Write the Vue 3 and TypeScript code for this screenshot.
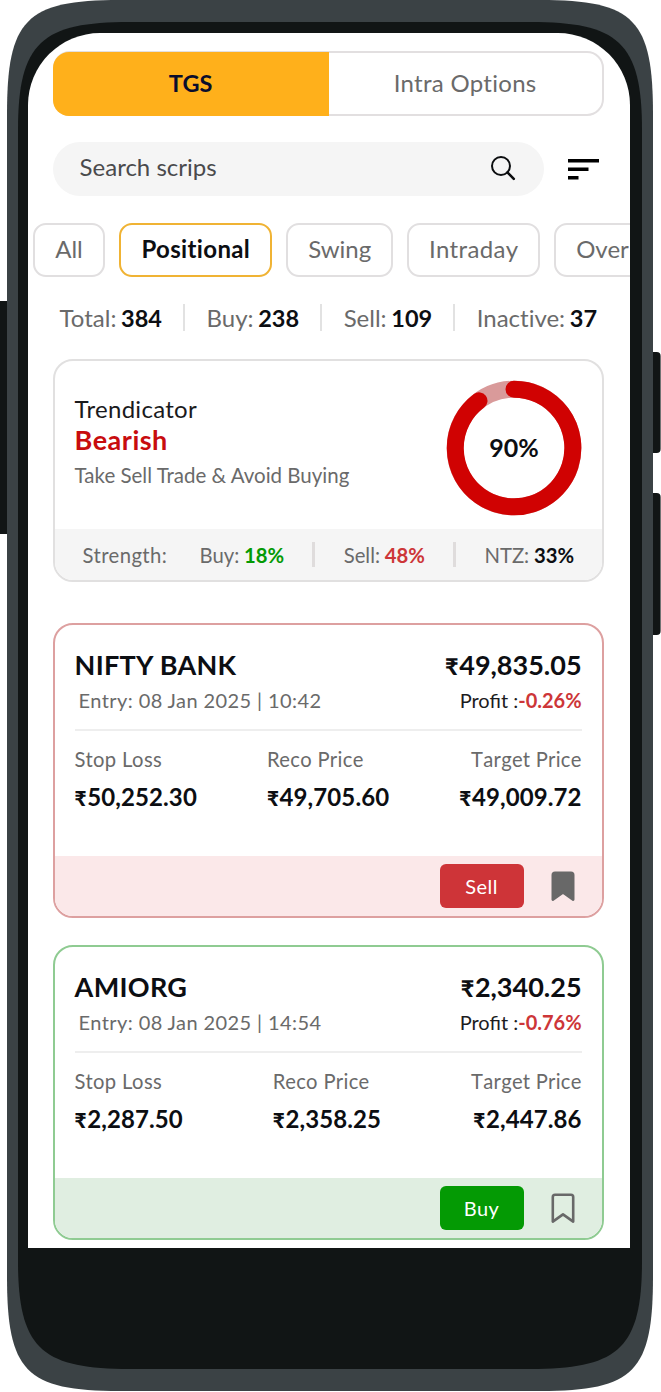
<script setup lang="ts">
interface Filter { label: string; active?: boolean }
interface Count { label: string; value: string }
interface Trade {
  name: string
  price: string
  time: string
  profit: string
  stop: string
  reco: string
  target: string
  side: 'Sell' | 'Buy'
  saved: boolean
}

const filters: Filter[] = [
  { label: 'All' },
  { label: 'Positional', active: true },
  { label: 'Swing' },
  { label: 'Intraday' },
  { label: 'Over' },
]

const counts: Count[] = [
  { label: 'Total:', value: '384' },
  { label: 'Buy:', value: '238' },
  { label: 'Sell:', value: '109' },
  { label: 'Inactive:', value: '37' },
]

const trades: Trade[] = [
  {
    name: 'NIFTY BANK', price: '49,835.05', time: '08 Jan 2025 | 10:42', profit: '-0.26%',
    stop: '50,252.30', reco: '49,705.60', target: '49,009.72', side: 'Sell', saved: true,
  },
  {
    name: 'AMIORG', price: '2,340.25', time: '08 Jan 2025 | 14:54', profit: '-0.76%',
    stop: '2,287.50', reco: '2,358.25', target: '2,447.86', side: 'Buy', saved: false,
  },
]
</script>

<template>
  <main class="device">
    <svg class="frame" viewBox="0 0 661 1392" aria-hidden="true">
      <g fill="#111515">
        <rect x="-6" y="301" width="20" height="233" rx="4" />
        <rect x="640" y="352" width="20.6" height="101" rx="4" />
        <rect x="640" y="493" width="20.6" height="142" rx="4" />
      </g>
      <path fill="#3b4245" d="M7 115C7 20 25 0 120 0H540C635 0 653 20 653 115V1276C653 1371 635 1391 540 1391H120C25 1391 7 1371 7 1276Z" />
      <path fill="#111515" d="M18 130C18 42 42 22 130 22H530C618 22 642 42 642 130V1261C642 1349 618 1369 530 1369H130C42 1369 18 1349 18 1261Z" />
    </svg>

    <div class="screen">
      <nav class="tabs">
        <button class="tab on">TGS</button>
        <button class="tab">Intra Options</button>
      </nav>

      <div class="search-row">
        <div class="search">
          <span>Search scrips</span>
          <svg width="28" height="28" viewBox="0 0 28 28" fill="none" stroke="#0c0e10">
            <circle cx="12" cy="12" r="9" stroke-width="2" />
            <path d="M18.4 18.4L24.8 24.8" stroke-width="2.6" stroke-linecap="round" />
          </svg>
        </div>
        <svg class="sort" width="31" height="21" viewBox="0 0 31 21" fill="#000">
          <path d="M0 0H31V3.6H0ZM0 8.6H20.5V12H0ZM0 17H10.5V20.4H0Z" />
        </svg>
      </div>

      <div class="filters">
        <button v-for="f in filters" :key="f.label" class="chip" :class="[f.label.toLowerCase(), { active: f.active }]">{{ f.label }}</button>
      </div>

      <div class="counts">
        <template v-for="(c, i) in counts" :key="c.label">
          <i v-if="i" class="bar" />
          <span>{{ c.label }} <b>{{ c.value }}</b></span>
        </template>
      </div>

      <section class="trend">
        <div class="trend-main">
          <div class="trend-text">
            <span class="t-title">Trendicator</span>
            <strong class="t-state">Bearish</strong>
            <span class="t-note">Take Sell Trade &amp; Avoid Buying</span>
          </div>
          <svg class="ring" width="136" height="136" viewBox="0 0 136 136">
            <circle cx="68" cy="68" r="58.8" fill="none" stroke="#d99a9a" stroke-width="17" />
            <path d="M68 9.2A58.8 58.8 0 1 1 33 20.8" fill="none" stroke="#d00202" stroke-width="17" stroke-linecap="round" />
            <text x="68" y="77" text-anchor="middle">90%</text>
          </svg>
        </div>
        <div class="strength">
          <span class="s-label">Strength:</span>
          <span>Buy: <b class="green">18%</b></span>
          <i class="bar" />
          <span>Sell: <b class="red">48%</b></span>
          <i class="bar" />
          <span>NTZ: <b>33%</b></span>
        </div>
      </section>

      <article v-for="t in trades" :key="t.name" class="card" :class="t.side.toLowerCase()">
        <div class="body">
          <div class="row head"><span class="name">{{ t.name }}</span><span><i class="rs">₹</i>{{ t.price }}</span></div>
          <div class="row meta">
            <span class="entry">Entry: {{ t.time }}</span>
            <span class="profit">Profit :<b>{{ t.profit }}</b></span>
          </div>
          <div class="row prices">
            <div><span>Stop Loss</span><b><i class="rs">₹</i>{{ t.stop }}</b></div>
            <div><span>Reco Price</span><b><i class="rs">₹</i>{{ t.reco }}</b></div>
            <div class="end"><span>Target Price</span><b><i class="rs">₹</i>{{ t.target }}</b></div>
          </div>
        </div>
        <div class="foot">
          <button class="action">{{ t.side }}</button>
          <svg width="24" height="31" viewBox="0 0 24 31" stroke="#686868" stroke-width="2.6" stroke-linejoin="round" :fill="t.saved ? '#686868' : 'none'">
            <path d="M4 1.7H20Q22.2 1.7 22.2 3.9V28.6L12 21.4L1.8 28.6V3.9Q1.8 1.7 4 1.7Z" />
          </svg>
        </div>
      </article>
    </div>
  </main>
</template>

<style>
body { background: #fff; }
</style>

<style scoped>
* { box-sizing: border-box; }
.device {
  position: relative;
  width: 661px;
  height: 1392px;
  padding: 33px 31px 0 27.6px;
  overflow: hidden;
  font-family: Lato, "Liberation Sans", sans-serif;
  color: #6a6a6a;
}
.frame { position: absolute; left: 0; top: 0; width: 661px; height: 1392px; }
.screen {
  position: relative;
  display: flex;
  flex-direction: column;
  width: 602px;
  height: 1215px;
  padding: 18px 0 0;
  background: #fff;
  border-radius: 72px 72px 0 0;
  overflow: hidden;
}
button { font: inherit; color: inherit; background: none; border: 0; padding: 0; }
b { font-weight: 700; color: #0c0e12; }

.tabs {
  display: flex;
  flex: none;
  width: 551px;
  height: 65px;
  margin-left: 25px;
  border: 2px solid #e2dfe0;
  border-radius: 17px;
  font-size: 24px;
}
.tab { flex: 1; height: 61px; padding-bottom: 2px; letter-spacing: 0.3px; }
.tab.on {
  flex: none;
  width: 276px;
  height: 64px;
  margin: -1.5px 0 -1.5px -2px;
  background: #ffb01b;
  border-radius: 16px 0 0 16px;
  color: #0a0d2c;
  font-size: 23.5px;
  font-weight: 700;
  letter-spacing: 0;
}

.search-row { display: flex; align-items: center; flex: none; height: 54px; margin: 26px 0 0 25px; }
.search {
  display: flex;
  align-items: center;
  justify-content: space-between;
  width: 491px;
  height: 54px;
  padding: 0 27px 2px 27px;
  border-radius: 27px;
  background: #f5f5f5;
  font-size: 24px;
  color: #4a4a4c;
}
.search span { margin-bottom: 4px; }
.sort { margin-left: 24px; }

.filters { display: flex; flex: none; gap: 14px; margin: 27px 0 0 5px; font-size: 24px; }
.chip {
  flex: none;
  height: 54px;
  padding-bottom: 3px;
  border: 2px solid #e1dfe0;
  border-radius: 13px;
}
.all { width: 72.8px; }
.positional { width: 152.8px; letter-spacing: 0.35px; }
.swing { width: 107px; }
.intraday { width: 133px; letter-spacing: 0.4px; }
.over { width: 146px; padding-left: 20px; text-align: left; }
.chip.active { border-color: #f0b334; color: #0c0e12; font-weight: 700; }

.counts {
  display: flex;
  align-items: center;
  justify-content: space-between;
  flex: none;
  height: 30px;
  margin: 25px 32.5px 0 32px;
  font-size: 24px;
  font-variant-ligatures: none;
  white-space: nowrap;
}
.counts b { margin-left: -1.5px; font-size: 23.5px; }
.bar { width: 2px; height: 27px; background: #e2e2e2; }

.trend {
  flex: none;
  width: 551px;
  height: 223px;
  margin: 27px 0 0 25px;
  border: 2px solid #e1e0e0;
  border-radius: 20px;
  overflow: hidden;
}
.trend-main { display: flex; justify-content: space-between; height: 168px; padding: 19px 19.4px 0 20px; }
.trend-text { display: flex; flex-direction: column; padding-top: 14px; }
.t-title { font-size: 24px; line-height: 30px; color: #1a1a1c; letter-spacing: 0.3px; }
.t-state { font-size: 27px; line-height: 31px; color: #c80c0e; font-weight: 700; letter-spacing: 0.5px; }
.t-note { margin-top: 8px; font-size: 20.5px; line-height: 24px; }
.ring text { font-size: 25px; font-weight: 700; fill: #0c0e12; }
.strength {
  display: flex;
  align-items: center;
  height: 53px;
  padding: 0 27.5px 0 28px;
  justify-content: space-between;
  background: #f5f5f5;
  font-size: 20.3px;
  white-space: nowrap;
}
.strength span { margin-bottom: 1px; }
.strength .s-label { margin-right: 4px; letter-spacing: 0.4px; }
.strength b { margin-left: -0.5px; }
.strength .bar { width: 3px; height: 25px; margin-bottom: 3px; background: #dfdcdc; }
.strength .green { color: #049a04; }
.strength .red { color: #cd3638; }

.card {
  flex: none;
  width: 551px;
  height: 295px;
  margin: 41px 0 0 25px;
  border: 2px solid #dda0a0;
  border-radius: 20px;
  overflow: hidden;
}
.card + .card { margin-top: 27px; }
.card.buy { border-color: #8fcb92; }
.body { height: 231px; padding: 23px 20px 0; }
.row { display: flex; justify-content: space-between; white-space: nowrap; }
.head { font-size: 27px; line-height: 34px; font-weight: 700; color: #0c0e12; }
.name { letter-spacing: 0.3px; }
.rs { margin-right: 0.03em; font-size: 0.86em; line-height: 1; font-style: normal; font-weight: 900; }
.meta {
  height: 49px;
  padding-top: 6px;
  border-bottom: 2px solid #eee;
  font-size: 20px;
  line-height: 24px;
}
.entry { padding-left: 4px; letter-spacing: 0.41px; }
.profit { color: #1c1c1e; }
.profit b { color: #cd3638; }
.prices { padding-top: 16px; }
.prices div { display: flex; flex-direction: column; }
.prices span { font-size: 20.2px; line-height: 24px; letter-spacing: 0.38px; }
.prices b { margin-top: 11px; font-size: 24px; line-height: 30px; letter-spacing: 0.1px; }
.prices .end { align-items: flex-end; }
.prices .end span { font-kerning: none; letter-spacing: 0.25px; }
.foot {
  display: flex;
  align-items: center;
  justify-content: flex-end;
  height: 60px;
  padding: 0 27px 0 0;
  background: #fbe8e9;
}
.buy .foot { background: #e0eee1; }
.action {
  width: 84px;
  height: 44px;
  padding-bottom: 1px;
  margin-right: 27px;
  border-radius: 6px;
  background: #ce3438;
  color: #fff;
  font-size: 20px;
  letter-spacing: 0.5px;
}
.buy .action { background: #049a04; }
</style>
